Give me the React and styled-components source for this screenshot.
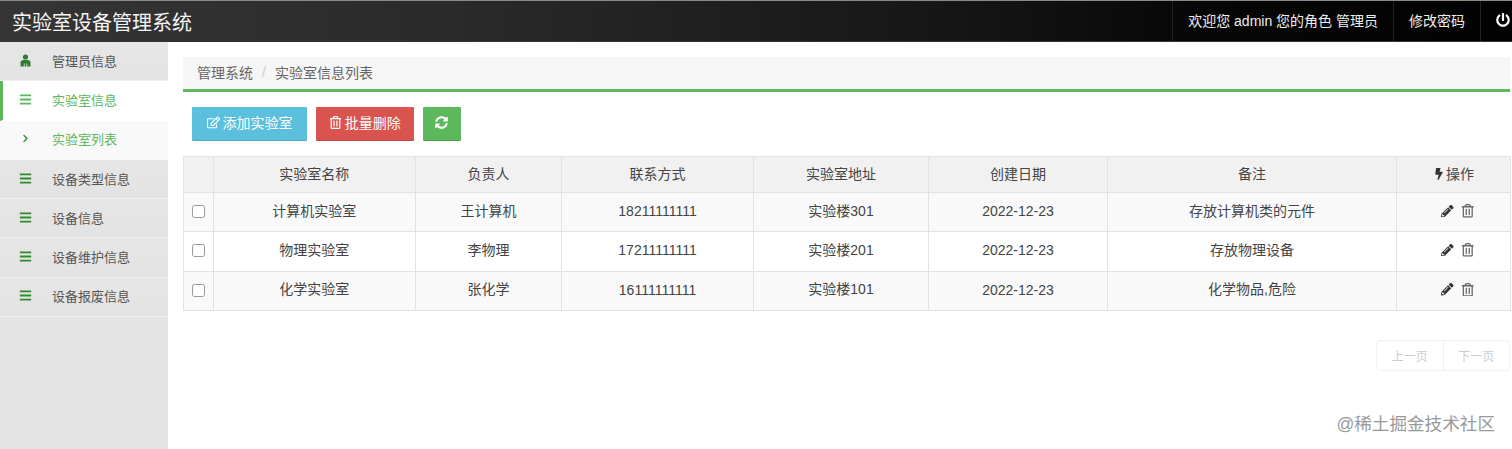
import React from 'react';
import styled, { createGlobalStyle } from 'styled-components';
import { FaBars, FaChevronRight, FaPowerOff, FaBolt, FaPencilAlt, FaRegTrashAlt, FaSyncAlt, FaRegEdit } from 'react-icons/fa';

const Global = createGlobalStyle`
  html, body { margin: 0; padding: 0; background: #fff; overflow: hidden; }
  body { font-family: "Liberation Sans", "Noto Sans CJK SC", sans-serif; font-size: 14px; color: #444; }
  * { box-sizing: border-box; }
`;
const Page = styled.div`position: relative; width: 1512px; height: 449px; display: flex; flex-direction: column; overflow: hidden;`;
const Header = styled.header`
  height: 42px; flex: none; display: flex; align-items: stretch; justify-content: space-between;
  border-top: 1px solid #8a8a8a; border-bottom: 1px solid #333;
  background: linear-gradient(to right, #353535 0%, #2a2a2a 30%, #141414 65%, #060606 80%, #020202 100%);
`;
const Title = styled.div`font-size: 20px; line-height: 40px; height: 40px; padding-top: 2px; color: #f5f5f5; padding-left: 12px;`;
const Nav = styled.nav`display: flex;`;
const NavItem = styled.div`
  display: flex; align-items: center; color: #eee; font-size: 14px; border-left: 1px solid #222;
  padding: 0 ${p => p.$right ?? 15}px 2px ${p => p.$left ?? 15}px;
  svg { font-size: 14px; color: #fff; }
`;
const Body = styled.div`flex: 1; display: flex; min-height: 0;`;
const Side = styled.aside`width: 168px; flex: none; background: #e4e4e4;`;
const SideItem = styled.div`
  height: 39.3px; display: flex; align-items: center; font-size: 13px;
  padding: 0 0 2px ${p => p.$active ? 16 : 19}px;
  color: ${p => p.$active || p.$sub ? '#5cb85c' : '#555'};
  background: ${p => p.$active ? '#fff' : p.$sub ? '#f9f9f9' : 'linear-gradient(#e6e6e6, #e3e3e3)'};
  border-left: ${p => p.$active ? '3px solid #5cb85c' : 'none'};
  border-bottom: 1px solid ${p => p.$active || p.$sub ? 'transparent' : '#efefef'};
`;
const SideIcon = styled.span`
  width: 33px; display: flex; align-items: center; color: ${p => p.$c || '#2e8b2e'};
  svg { font-size: ${p => p.$s || 13}px; margin-left: ${p => p.$m || 0}px; }
`;
const Main = styled.main`flex: 1; padding: 15px 2px 0 15px; min-width: 0;`;
const Crumb = styled.div`
  height: 35px; background: #f6f6f6; border-bottom: 3px solid #5cb85c; padding: 0 14px 2px;
  display: flex; align-items: center; color: #666; font-size: 14px;
`;
const Sep = styled.span`color: #ccc; padding: 0 9px;`;
const Toolbar = styled.div`display: flex; gap: 9px; padding: 15px 0 15px 9px;`;
const Btn = styled.button`
  height: 34px; padding: 0 0 3px; width: ${p => p.$w}px; border: 0; border-bottom: 1px solid rgba(0,0,0,.12); border-radius: 1px;
  background: ${p => p.$bg}; color: #fff; font: inherit; font-size: 14px;
  display: flex; align-items: center; justify-content: center; gap: 3px;
  svg { font-size: 13px; flex: none; }
`;
const Table = styled.table`width: 1327px; table-layout: fixed; border-collapse: collapse; font-size: 14px; color: #444;`;
const Th = styled.th`
  height: 36px; font-weight: 400; text-align: center; background: #f1f1f1; border: 1px solid #e2e2e2; padding: 0 0 3px;
  svg { font-size: 12px; vertical-align: -1px; margin-right: 1px; color: #333; }
`;
const Row = styled.tr`background: ${p => p.$odd ? '#f9f9f9' : '#fff'};`;
const Td = styled.td`height: 39.3px; text-align: center; border: 1px solid #e2e2e2; padding: 0 0 ${p => p.$lift ?? 5}px ${p => p.$left ?? 0}px;`;
const Check = styled.span`display: inline-block; width: 13px; height: 13px; border: 1px solid #999; border-radius: 2.5px; background: #fff; vertical-align: middle;`;
const Ops = styled.span`
  display: inline-flex; align-items: center; gap: 7px;
  svg { font-size: 12.5px; display: block; }
`;
const Trash = styled(FaRegTrashAlt)`&& { font-size: 13.5px; color: #666; }`;
const Pager = styled.div`display: flex; justify-content: flex-end; margin-top: 29.5px;`;
const PageBtn = styled.span`
  width: 67.5px; height: 31px; display: flex; align-items: center; justify-content: center; font-size: 12px; color: #ccc;
  border: 1px solid #f0f0f0; margin-left: -1px; background: #fff;
  border-radius: ${p => p.$first ? '4px 0 0 4px' : '0 4px 4px 0'};
`;
const Mark = styled.div`position: absolute; right: 17px; top: 413px; font-size: 17.6px; line-height: 22px; color: #999;`;

const cols = [29.5, 202.5, 146, 192, 175, 179, 289, 114];
const rows = [
  ['计算机实验室', '王计算机', '18211111111', '实验楼301', '2022-12-23', '存放计算机类的元件'],
  ['物理实验室', '李物理', '17211111111', '实验楼201', '2022-12-23', '存放物理设备'],
  ['化学实验室', '张化学', '16111111111', '实验楼101', '2022-12-23', '化学物品,危险'],
];
const UserIcon = () => (
  <svg width="13" height="13" viewBox="0 0 13 13" fill="#2e7d2e">
    <circle cx="6.500" cy="3" r="2.600" />
    <path d="M1.500 12.500V8.500C1.500 7 2.800 6 4.200 6h4.600c1.400 0 2.700 1 2.700 2.500v4H8.200V9.500H7.400v3H5.600v-3h-.8v3z" />
  </svg>
);

export default function App() {
  return (
    <Page>
      <Global />
      <Header>
        <Title>实验室设备管理系统</Title>
        <Nav>
          <NavItem>欢迎您 admin 您的角色 管理员</NavItem>
          <NavItem>修改密码</NavItem>
          <NavItem $left={15} $right={2}><FaPowerOff /></NavItem>
        </Nav>
      </Header>
      <Body>
        <Side>
          <SideItem><SideIcon><UserIcon /></SideIcon>管理员信息</SideItem>
          <SideItem $active><SideIcon $c="#5cb85c"><FaBars /></SideIcon>实验室信息</SideItem>
          <SideItem $sub><SideIcon $c="#3f8f3f" $s={9} $m={2}><FaChevronRight /></SideIcon>实验室列表</SideItem>
          {['设备类型信息', '设备信息', '设备维护信息', '设备报废信息'].map(t => (
            <SideItem key={t}><SideIcon><FaBars /></SideIcon>{t}</SideItem>
          ))}
        </Side>
        <Main>
          <Crumb>管理系统<Sep>/</Sep>实验室信息列表</Crumb>
          <Toolbar>
            <Btn $bg="#5bc0de" $w={115}><FaRegEdit />添加实验室</Btn>
            <Btn $bg="#d9534f" $w={97.5}><FaRegTrashAlt />批量删除</Btn>
            <Btn $bg="#5cb85c" $w={38}><FaSyncAlt /></Btn>
          </Toolbar>
          <Table>
            <colgroup>{cols.map((w, i) => <col key={i} style={{ width: w }} />)}</colgroup>
            <thead>
              <tr>
                <Th />
                {['实验室名称', '负责人', '联系方式', '实验室地址', '创建日期', '备注'].map(t => <Th key={t}>{t}</Th>)}
                <Th><FaBolt />操作</Th>
              </tr>
            </thead>
            <tbody>
              {rows.map((r, i) => (
                <Row key={i} $odd={i % 2 === 0}>
                  <Td $lift={4}><Check /></Td>
                  {r.map((c, j) => <Td key={j} $lift={j === 2 || j === 4 ? 2 : 5}>{c}</Td>)}
                  <Td $lift={0} $left={8}><Ops><FaPencilAlt color="#333" /><Trash /></Ops></Td>
                </Row>
              ))}
            </tbody>
          </Table>
          <Pager>
            <PageBtn $first>上一页</PageBtn>
            <PageBtn>下一页</PageBtn>
          </Pager>
        </Main>
      </Body>
      <Mark>@稀土掘金技术社区</Mark>
    </Page>
  );
}
